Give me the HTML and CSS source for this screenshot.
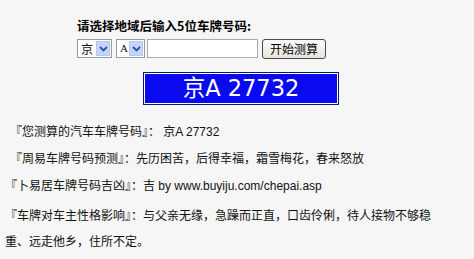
FILE: index.html
```html
<!DOCTYPE html>
<html>

<head>
    <meta charset="utf-8">
    <title>车牌号码测算</title>
    <link rel="stylesheet" href="styles.css">
</head>

<body>
    <div class="form">
        <div class="form-title">请选择地域后输入5位车牌号码:</div>
        <div class="form-row">
            <span class="pick pick-wide">
                <span class="pick-value">京</span>
                <span class="pick-arrow">
                    <svg width="9" height="6" viewBox="0 0 9 6"><path d="M1 1 L4.5 4.5 L8 1" fill="none" stroke="#2b4fa8" stroke-width="1.8"/></svg>
                </span>
            </span>
            <span class="pick pick-narrow">
                <span class="pick-value pick-latin">A</span>
                <span class="pick-arrow">
                    <svg width="9" height="6" viewBox="0 0 9 6"><path d="M1 1 L4.5 4.5 L8 1" fill="none" stroke="#2b4fa8" stroke-width="1.8"/></svg>
                </span>
            </span>
            <input type="text" class="number" id="number">
            <button class="go" id="go">开始测算</button>
        </div>
    </div>

    <div class="plate-wrap">
        <div class="plate">京A 27732</div>
    </div>

    <div class="result">
        <p class="shift">『您测算的汽车车牌号码』： 京A 27732</p>
        <p class="shift">『周易车牌号码预测』：先历困苦，后得幸福，霜雪梅花，春来怒放</p>
        <p>『卜易居车牌号码吉凶』：吉 by www.buyiju.com/chepai.asp</p>
        <p class="gap">『车牌对车主性格影响』：与父亲无缘，急躁而正直，口齿伶俐，待人接物不够稳<br>重、远走他乡，住所不定。</p>
    </div>
</body>

</html>
```

FILE: styles.css
```css
body {
    margin: 0;
    background-color: #f6f6f6;
    color: #111111;
    font-family: 'Liberation Sans', 'Noto Sans CJK SC', sans-serif;
    font-size: 12px;
}

.form {
    padding-left: 77px;
    padding-top: 18px;
}

.form-title {
    font-family: 'Noto Sans CJK SC', sans-serif;
    font-weight: 700;
    font-size: 12.5px;
    line-height: 16px;
    color: #000000;
}

.form-row {
    display: flex;
    align-items: center;
    margin-top: 5px;
    height: 19px;
}

.pick {
    display: flex;
    align-items: center;
    height: 17px;
    border: 1px solid #9a9a9a;
    background-color: #ffffff;
    padding-right: 1px;
}

.pick-wide {
    width: 32px;
}

.pick-narrow {
    width: 26px;
    margin-left: 4px;
}

.pick-value {
    flex: 1;
    padding-left: 3px;
    font-family: 'Noto Sans CJK SC', sans-serif;
    font-size: 12px;
    line-height: 17px;
}

.pick-latin {
    font-family: 'Liberation Serif', serif;
    font-size: 11px;
}

.pick-arrow {
    display: flex;
    align-items: center;
    justify-content: center;
    width: 14px;
    height: 15px;
    background-color: #c4d5fb;
    border: 1px solid #b4c8f4;
    box-sizing: border-box;
}

.number {
    width: 111px;
    height: 19px;
    box-sizing: border-box;
    margin: 0 0 0 2px;
    border: 1px solid #a5acb2;
    background-color: #ffffff;
    padding: 0 3px;
}

.go {
    margin-left: 4px;
    height: 20px;
    width: 64px;
    padding: 0;
    font-family: 'Noto Sans CJK SC', sans-serif;
    font-size: 12px;
    color: #000000;
    background: linear-gradient(#fcfcfb, #e6e4dc);
    border: 1px solid #4a4a4a;
    border-radius: 3px;
}

.plate-wrap {
    display: flex;
    justify-content: center;
    margin-top: 14px;
    padding-left: 8px;
}

.plate {
    width: 196px;
    height: 33px;
    box-sizing: border-box;
    border: 1px solid #0b1a66;
    box-shadow: inset 0 0 0 1px #ffffff;
    background-color: #0a0af0;
    color: #ffffff;
    font-family: 'DejaVu Sans', 'Noto Sans CJK SC', sans-serif;
    font-size: 22.5px;
    line-height: 31px;
    text-align: center;
}

.result {
    margin-top: 14px;
    padding-left: 5px;
    width: 464px;
}

.result p {
    margin: 0;
    line-height: 26px;
}

.result p.shift {
    padding-left: 5px;
    margin-bottom: 1px;
}

.result p.gap {
    margin-top: 4px;
}
```
